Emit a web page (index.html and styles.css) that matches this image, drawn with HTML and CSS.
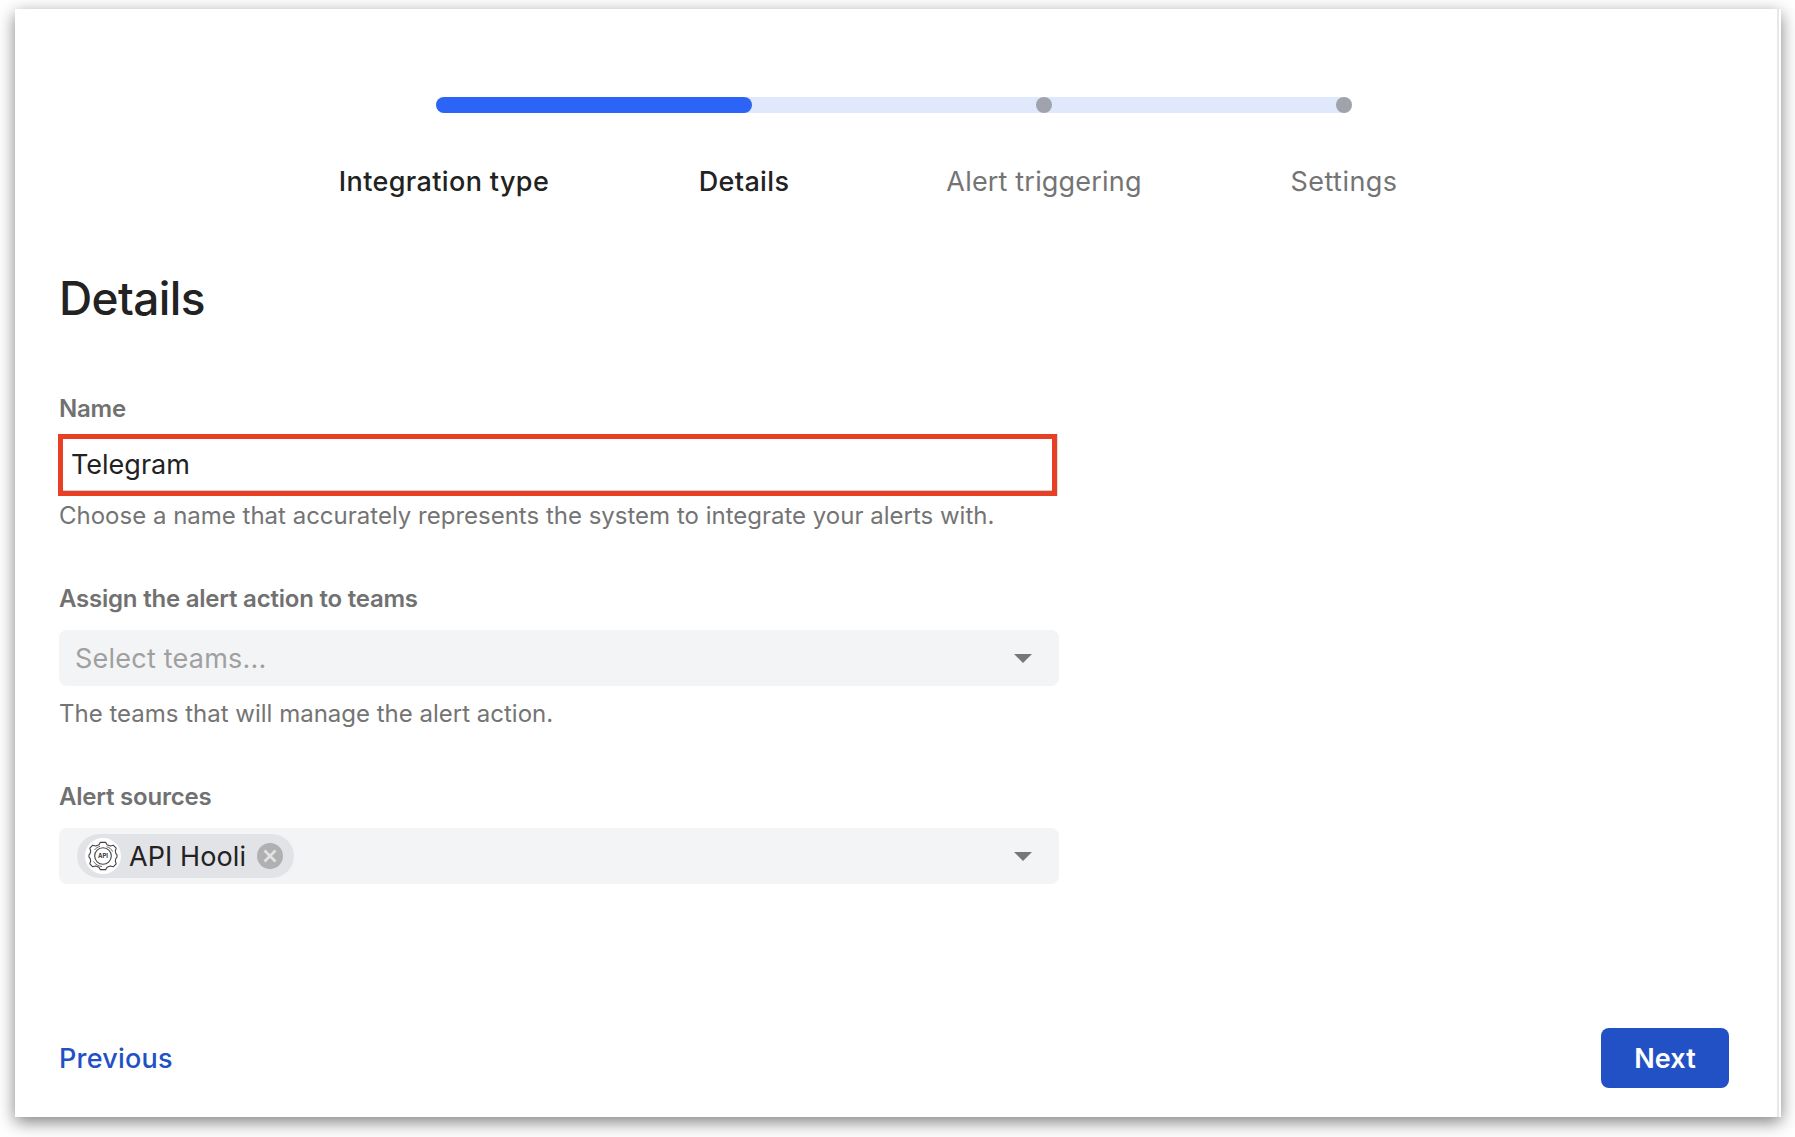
FILE: index.html
```html
<!DOCTYPE html>
<html lang="en">
<head>
<meta charset="utf-8">
<title>Details</title>
<link rel="stylesheet" href="styles.css">
</head>
<body>
<main class="card">
  <nav class="stepper">
    <div class="track"><div class="track-fill"></div><i class="dot dot-third"></i><i class="dot dot-last"></i></div>
    <ol class="steps">
      <li class="step step-done">Integration type</li>
      <li class="step step-done">Details</li>
      <li class="step step-long">Alert triggering</li>
      <li class="step">Settings</li>
    </ol>
  </nav>
  <h1 class="title">Details</h1>
  <form class="form">
    <section class="field field-name">
      <label class="label">Name</label>
      <div class="input">Telegram</div>
      <p class="hint">Choose a name that accurately represents the system to integrate your alerts with.</p>
    </section>
    <section class="field">
      <label class="label">Assign the alert action to teams</label>
      <div class="select"><span class="placeholder">Select teams...</span>
        <svg class="caret" viewBox="0 0 18 9"><path d="M0 0h18L9 9z"/></svg></div>
      <p class="hint">The teams that will manage the alert action.</p>
    </section>
    <section class="field">
      <label class="label">Alert sources</label>
      <div class="select">
        <div class="chip">
          <svg class="avatar" viewBox="0 0 36 36">
            <circle cx="18" cy="18" r="18" fill="#fff"/>
            <g fill="none" stroke="#444" stroke-width="1.1" stroke-linejoin="round">
              <path d="M14 6.800 15.200 4.400h5.600L22 6.800l3.400 1.300 2.800-.9 3 3-.9 2.800.6 2.600 1.100 1.300v2.200l-1.100 1.300-.6 2.600.9 2.800-3 3-2.800-.9-3.400 1.300-1.200 2.400h-5.600L14 29.200l-3.400-1.300-2.800.9-3-3 .9-2.800-.6-2.600L4 19.100v-2.200l1.100-1.300.6-2.600-.9-2.800 3-3 2.800.9z"/>
              <circle cx="18" cy="18" r="8.300"/>
              <path d="M8.500 23.500c2 3 5 4.700 8.500 5M27.500 13.500c-1-2.500-3-4-6-4.800M9.500 12c1.500-2 3-3 5.500-3.600" stroke-width=".8"/>
            </g>
            <text class="avatar-text" x="18" y="20.200" text-anchor="middle">API</text>
          </svg>
          <span class="chip-name">API Hooli</span>
          <svg class="remove" viewBox="0 0 26 26"><circle cx="13" cy="13" r="13" fill="#b0b0b0"/><path d="M7.500 7.500l11 11M18.500 7.500l-11 11" stroke="#e2e3e7" stroke-width="2.600"/></svg>
        </div>
        <svg class="caret" viewBox="0 0 18 9"><path d="M0 0h18L9 9z"/></svg>
      </div>
    </section>
  </form>
  <footer class="actions">
    <a class="previous">Previous</a>
    <button class="next" type="button">Next</button>
  </footer>
</main>
</body>
</html>
```
FILE: styles.css
```css
* { box-sizing: border-box; }
body {
  margin: 0;
  padding: 9px 14px 20px 15px;
  background: #fff;
  font-family: Inter, "Liberation Sans", sans-serif;
  font-size: 27px;
  color: #222;
  overflow: hidden;
}
.card {
  position: relative;
  width: 1766px;
  height: 1108px;
  display: flex;
  flex-direction: column;
  padding: 88px 52px 29px 44px;
  background: #fff;
  box-shadow: 0 5px 16px rgba(0, 0, 0, .5);
}
.card::after {
  content: "";
  position: absolute;
  top: 0;
  bottom: 0;
  right: 2px;
  width: 2px;
  background: #e8e8e8;
}
.stepper { width: 1200px; margin-left: 235px; }
.track {
  position: relative;
  width: 916px;
  height: 16px;
  margin-left: 142px;
  border-radius: 8px;
  background: #dfe9fb;
}
.track-fill { width: 316px; height: 16px; border-radius: 8px; background: #2b64f6; }
.dot { position: absolute; top: 0; width: 16px; height: 16px; border-radius: 50%; background: #a0a3ab; }
.dot-third { left: 600px; }
.dot-last { left: 900px; }
.steps {
  display: grid;
  grid-template-columns: repeat(4, 300px);
  margin: 52px 0 0;
  padding: 0;
  list-style: none;
  line-height: 34px;
}
.step { text-align: center; color: #747474; letter-spacing: .46px; }
.step-done { color: #222; font-weight: 500; letter-spacing: .37px; }
.step-long { letter-spacing: .18px; }
.title { margin: 71px 0 0; font-size: 46px; font-weight: 500; line-height: 56px; letter-spacing: -.6px; }
.form { width: 1000px; margin-top: 68px; }
.field { margin-bottom: 53px; }
.label { display: block; font-size: 24px; font-weight: 600; line-height: 30px; letter-spacing: -.22px; color: #717171; }
.input {
  width: 999px;
  height: 62px;
  margin: 10px 0 0 -1px;
  padding: 0 8px;
  border: 5px solid #e94025;
  box-shadow: inset 0 -1px #ccd0d6, 1px 0 #d9dce1;
  line-height: 52px;
}
.hint { margin: 13px 0 0; font-size: 24px; line-height: 30px; color: #747474; white-space: nowrap; }
.field-name .hint { margin-top: 5px; }
.select {
  display: flex;
  align-items: center;
  justify-content: space-between;
  height: 56px;
  margin-top: 16px;
  padding: 0 27px 0 16px;
  border-radius: 8px;
  background: #f3f4f6;
}
.placeholder { color: #a0a0a0; letter-spacing: .23px; }
.caret { width: 18px; height: 9px; fill: #777; }
.chip {
  display: flex;
  align-items: center;
  width: 217px;
  height: 44px;
  margin-left: 2px;
  padding: 0 11px 0 8px;
  border-radius: 22px;
  background: #e2e3e7;
}
.avatar { width: 36px; height: 36px; }
.avatar-text { font-size: 6px; font-weight: 700; fill: #333; }
.remove { width: 26px; height: 26px; }
.chip-name { margin: 0 auto 0 8px; letter-spacing: .1px; }
.actions { display: flex; align-items: center; justify-content: space-between; margin-top: auto; }
.previous { color: #2251c5; font-weight: 500; letter-spacing: .23px; }
.next {
  width: 128px;
  height: 60px;
  padding: 0;
  border: 0;
  border-radius: 8px;
  background: #2251c5;
  color: #fff;
  font: 600 27px Inter, sans-serif;
  letter-spacing: .1px;
}
```
